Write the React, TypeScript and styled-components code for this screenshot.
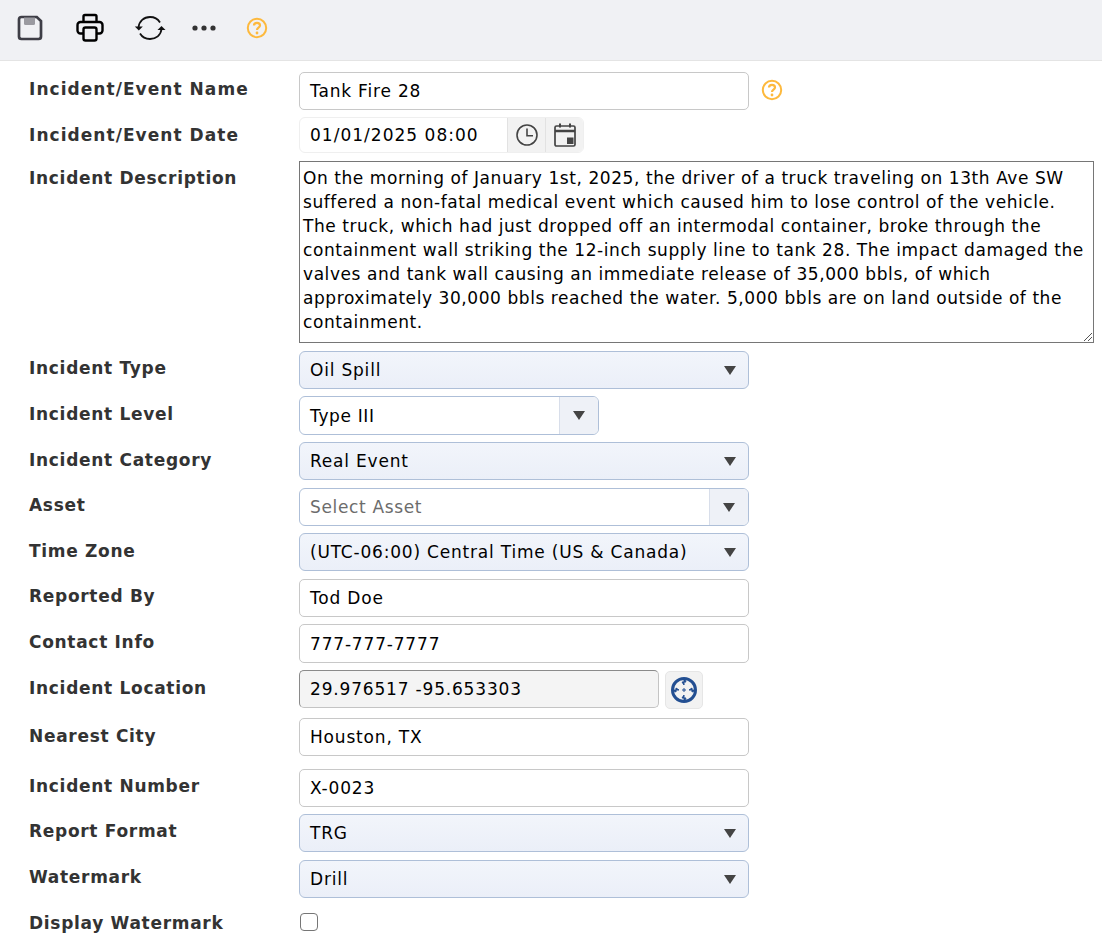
import React from "react";
import styled, { createGlobalStyle } from "styled-components";

const GlobalStyle = createGlobalStyle`
  html, body {
    margin: 0;
    padding: 0;
    background: #fff;
    font-family: "DejaVu Sans", Verdana, sans-serif;
    font-size: 17px;
    letter-spacing: 0.65px;
    color: #000;
  }
`;

const Page = styled.div`
  width: 1102px;
  height: 940px;
  overflow: hidden;
`;

const Toolbar = styled.div`
  height: 60px;
  background: #f0f1f4;
  border-bottom: 1px solid #e4e4e4;
  display: flex;
  align-items: center;
  box-sizing: content-box;
  padding-left: 16px;
  padding-bottom: 0;
`;

const ToolButton = styled.div<{ $w: number }>`
  width: ${(p) => p.$w}px;
  display: flex;
  align-items: center;
  margin-top: -4px;
`;

const Form = styled.div`
  padding: 11px 8px 0 29px;
`;

const Row = styled.div<{ $top?: number }>`
  display: flex;
  align-items: flex-start;
  margin-top: ${(p) => p.$top ?? 8}px;
`;

const Label = styled.div<{ $drop?: boolean; $wide?: boolean }>`
  width: 270px;
  flex: none;
  font-size: 17px;
  font-weight: bold;
  color: #333;
  line-height: 20px;
  letter-spacing: ${(p) => (p.$wide ? "1.05px" : "0.7px")};
  padding-top: ${(p) => (p.$drop ? 8 : 7)}px;
  white-space: nowrap;
`;

const TextBox = styled.div<{ $w?: number; $h?: number; $readonly?: boolean }>`
  box-sizing: border-box;
  width: ${(p) => p.$w ?? 450}px;
  height: ${(p) => p.$h ?? 38}px;
  border: 1px solid ${(p) => (p.$readonly ? "#c4c4c4" : "#c8c8c8")};
  ${(p) => p.$readonly && "border-top-color: #8a8a8a; border-left-color: #8a8a8a;"}
  border-radius: 5px;
  background: ${(p) => (p.$readonly ? "#f4f4f4" : "#fff")};
  padding: 0 10px;
  display: flex;
  align-items: center;
  white-space: nowrap;
  letter-spacing: 0.82px;
`;

const HelpSlot = styled.div`
  margin: 7px 0 0 12px;
  display: flex;
`;

const DateGroup = styled.div`
  box-sizing: border-box;
  width: 285px;
  height: 36px;
  border: 1px solid #efefef;
  border-radius: 6px;
  display: flex;
  align-items: center;
  overflow: hidden;
`;

const DateValue = styled.div`
  flex: 1;
  padding-left: 10px;
  white-space: nowrap;
  letter-spacing: 1.02px;
`;

const DateButton = styled.div`
  width: 37px;
  height: 100%;
  background: #f2f2f2;
  border-left: 1px solid #e2e2e2;
  display: flex;
  align-items: center;
  justify-content: center;
`;

const DescriptionBox = styled.div`
  box-sizing: border-box;
  width: 795px;
  height: 182px;
  border: 1px solid #767676;
  padding: 4px 3px;
  line-height: 24px;
  position: relative;
  white-space: pre;
  letter-spacing: 0.57px;
`;

const ResizeGrip = styled.svg`
  position: absolute;
  right: 0;
  bottom: 0;
`;

const SelectBox = styled.div<{ $w?: number }>`
  box-sizing: border-box;
  width: ${(p) => p.$w ?? 450}px;
  height: 38px;
  border: 1px solid #aebfd8;
  border-radius: 6px;
  background: linear-gradient(#f2f5fb, #ebeff8);
  padding: 0 12px 0 10px;
  display: flex;
  align-items: center;
  justify-content: space-between;
  white-space: nowrap;
  letter-spacing: 0.8px;
`;

const Caret = styled.span`
  width: 0;
  height: 0;
  border-left: 6.5px solid transparent;
  border-right: 6.5px solid transparent;
  border-top: 9px solid #444;
  flex: none;
`;

const ComboBox = styled.div<{ $w?: number; $h?: number }>`
  box-sizing: border-box;
  width: ${(p) => p.$w ?? 450}px;
  height: ${(p) => p.$h ?? 38}px;
  border: 1px solid #aebfd8;
  border-radius: 6px;
  background: #fff;
  display: flex;
  align-items: stretch;
  overflow: hidden;
`;

const ComboText = styled.div<{ $muted?: boolean }>`
  flex: 1;
  padding-left: 10px;
  display: flex;
  align-items: center;
  color: ${(p) => (p.$muted ? "#6c6c6c" : "#000")};
`;

const ComboButton = styled.div`
  width: 38px;
  background: #eef1f7;
  border-left: 1px solid #d8deea;
  display: flex;
  align-items: center;
  justify-content: center;
`;

const LocateButton = styled.div`
  box-sizing: border-box;
  width: 38px;
  height: 38px;
  margin-left: 6px;
  margin-top: 1px;
  border: 1px solid #e6e6e6;
  border-radius: 5px;
  background: #f2f2f2;
  display: flex;
  align-items: center;
  justify-content: center;
`;

const CheckBox = styled.div`
  box-sizing: border-box;
  width: 18px;
  height: 18px;
  margin: 7px 0 0 1px;
  border: 1.5px solid #767676;
  border-radius: 4px;
  background: #fff;
`;

const HelpIcon = ({ size = 22 }: { size?: number }) => (
  <svg width={size} height={size} viewBox="0 0 22 22" fill="none">
    <circle cx="11" cy="11" r="9.2" stroke="#fdb93d" strokeWidth="2" />
    <path
      d="M8 8.6c0-1.7 1.3-2.8 3-2.8s3 1.100 3 2.600c0 2.200-3 2.300-3 4.600"
      stroke="#fdb93d"
      strokeWidth="2.2"
    />
    <circle cx="11" cy="16" r="1.4" fill="#fdb93d" />
  </svg>
);

const SaveIcon = () => (
  <svg width="28" height="28" viewBox="0 0 28 28" fill="none">
    <path
      d="M3 5.5A2.5 2.5 0 0 1 5.5 3h15.3L25 7v15.500a2.500 2.500 0 0 1-2.500 2.500h-17A2.500 2.500 0 0 1 3 22.500z"
      stroke="#3e3e46"
      strokeWidth="2.700"
    />
    <path d="M8 3.500v6a1.500 1.500 0 0 0 1.500 1.500h8a1.500 1.500 0 0 0 1.500-1.500v-6z" fill="#9a9aa0" />
  </svg>
);

const PrintIcon = () => (
  <svg width="30" height="30" viewBox="0 0 30 30" fill="none" stroke="#000" strokeWidth="2.400">
    <path d="M8.500 9V3.500a1.500 1.500 0 0 1 1.500-1.500h10a1.500 1.500 0 0 1 1.500 1.500V9" />
    <path d="M8 20.500H5.500A3 3 0 0 1 2.500 17.500v-5.500A3 3 0 0 1 5.500 9h19a3 3 0 0 1 3 3v5.500a3 3 0 0 1-3 3H22" />
    <rect x="8.500" y="14.500" width="13" height="13" rx="2" />
  </svg>
);

const RefreshIcon = () => (
  <svg width="32" height="30" viewBox="0 0 32 30" fill="none">
    <path d="M4.500 14.500C5 8 10 4 16 4c4.500 0 8 2.200 10 5.500" stroke="#111" strokeWidth="1.800" />
    <path d="M27.500 16c-.6 6.300-5.500 10-11.500 10-4.500 0-8-2.200-10-5.500" stroke="#111" strokeWidth="1.800" />
    <path d="M.8 13.500l4 4 4-4z" fill="#111" />
    <path d="M23.500 17l4-4 4 4z" fill="#111" />
  </svg>
);

const DotsIcon = () => (
  <svg width="24" height="6" viewBox="0 0 24 6">
    <circle cx="3" cy="3" r="2.600" fill="#333" />
    <circle cx="12" cy="3" r="2.600" fill="#333" />
    <circle cx="21" cy="3" r="2.600" fill="#333" />
  </svg>
);

const ClockIcon = () => (
  <svg width="24" height="24" viewBox="0 0 24 24" fill="none" stroke="#444" strokeWidth="1.600">
    <circle cx="12" cy="12" r="10" />
    <path d="M12 5.500V12.800h6" />
  </svg>
);

const CalendarIcon = () => (
  <svg width="24" height="26" viewBox="0 0 24 26" fill="none">
    <rect x="2" y="4" width="20" height="20" rx="1.500" stroke="#444" strokeWidth="1.700" />
    <path d="M2 9h20" stroke="#444" strokeWidth="2.400" />
    <path d="M7 1.500v4M17 1.500v4" stroke="#444" strokeWidth="2" />
    <rect x="14" y="15.500" width="6.500" height="6.500" fill="#444" />
  </svg>
);

const CrosshairIcon = () => (
  <svg width="28" height="28" viewBox="0 0 28 28" fill="none">
    <circle cx="14" cy="14" r="11.500" stroke="#234f92" strokeWidth="3" />
    <path d="M14 2v7l-2-3h4zM14 26v-7l-2 3h4zM2 14h7l-3-2v4zM26 14h-7l3-2v4z" fill="#234f92" stroke="#234f92" strokeWidth="1" />
    <path d="M14 12v4M12 14h4" stroke="#234f92" strokeWidth="1" />
  </svg>
);

const description = [
  "On the morning of January 1st, 2025, the driver of a truck traveling on 13th Ave SW",
  "suffered a non-fatal medical event which caused him to lose control of the vehicle.",
  "The truck, which had just dropped off an intermodal container, broke through the",
  "containment wall striking the 12-inch supply line to tank 28. The impact damaged the",
  "valves and tank wall causing an immediate release of 35,000 bbls, of which",
  "approximately 30,000 bbls reached the water. 5,000 bbls are on land outside of the",
  "containment.",
].join("\n");

export default function App() {
  return (
    <Page>
      <GlobalStyle />
      <Toolbar>
        <ToolButton $w={59}><SaveIcon /></ToolButton>
        <ToolButton $w={59}><PrintIcon /></ToolButton>
        <ToolButton $w={58}><RefreshIcon /></ToolButton>
        <ToolButton $w={54}><DotsIcon /></ToolButton>
        <ToolButton $w={24}><HelpIcon /></ToolButton>
      </Toolbar>
      <Form>
        <Row $top={0}>
          <Label $wide>Incident/Event Name</Label>
          <TextBox>Tank Fire 28</TextBox>
          <HelpSlot><HelpIcon /></HelpSlot>
        </Row>
        <Row $top={7}>
          <Label $wide $drop>Incident/Event Date</Label>
          <DateGroup>
            <DateValue>01/01/2025 08:00</DateValue>
            <DateButton><ClockIcon /></DateButton>
            <DateButton><CalendarIcon /></DateButton>
          </DateGroup>
        </Row>
        <Row $top={8}>
          <Label>Incident Description</Label>
          <DescriptionBox>
            {description}
            <ResizeGrip width="12" height="12" viewBox="0 0 12 12">
              <path d="M11 3L3 11M11 7L7 11" stroke="#555" strokeWidth="1" />
            </ResizeGrip>
          </DescriptionBox>
        </Row>
        <Row>
          <Label>Incident Type</Label>
          <SelectBox>Oil Spill<Caret /></SelectBox>
        </Row>
        <Row $top={7}>
          <Label $drop>Incident Level</Label>
          <ComboBox $w={300} $h={39}>
            <ComboText>Type III</ComboText>
            <ComboButton><Caret /></ComboButton>
          </ComboBox>
        </Row>
        <Row $top={7}>
          <Label $drop>Incident Category</Label>
          <SelectBox>Real Event<Caret /></SelectBox>
        </Row>
        <Row>
          <Label>Asset</Label>
          <ComboBox>
            <ComboText $muted>Select Asset</ComboText>
            <ComboButton><Caret /></ComboButton>
          </ComboBox>
        </Row>
        <Row $top={7}>
          <Label $drop>Time Zone</Label>
          <SelectBox>(UTC-06:00) Central Time (US &amp; Canada)<Caret /></SelectBox>
        </Row>
        <Row>
          <Label>Reported By</Label>
          <TextBox>Tod Doe</TextBox>
        </Row>
        <Row $top={7}>
          <Label $drop>Contact Info</Label>
          <TextBox $h={39}>777-777-7777</TextBox>
        </Row>
        <Row $top={7}>
          <Label $drop>Incident Location</Label>
          <TextBox $w={360} $readonly>29.976517 -95.653303</TextBox>
          <LocateButton><CrosshairIcon /></LocateButton>
        </Row>
        <Row $top={9}>
          <Label $drop>Nearest City</Label>
          <TextBox>Houston, TX</TextBox>
        </Row>
        <Row $top={13}>
          <Label>Incident Number</Label>
          <TextBox>X-0023</TextBox>
        </Row>
        <Row $top={7}>
          <Label>Report Format</Label>
          <SelectBox>TRG<Caret /></SelectBox>
        </Row>
        <Row>
          <Label>Watermark</Label>
          <SelectBox>Drill<Caret /></SelectBox>
        </Row>
        <Row $top={8}>
          <Label>Display Watermark</Label>
          <CheckBox />
        </Row>
      </Form>
    </Page>
  );
}
